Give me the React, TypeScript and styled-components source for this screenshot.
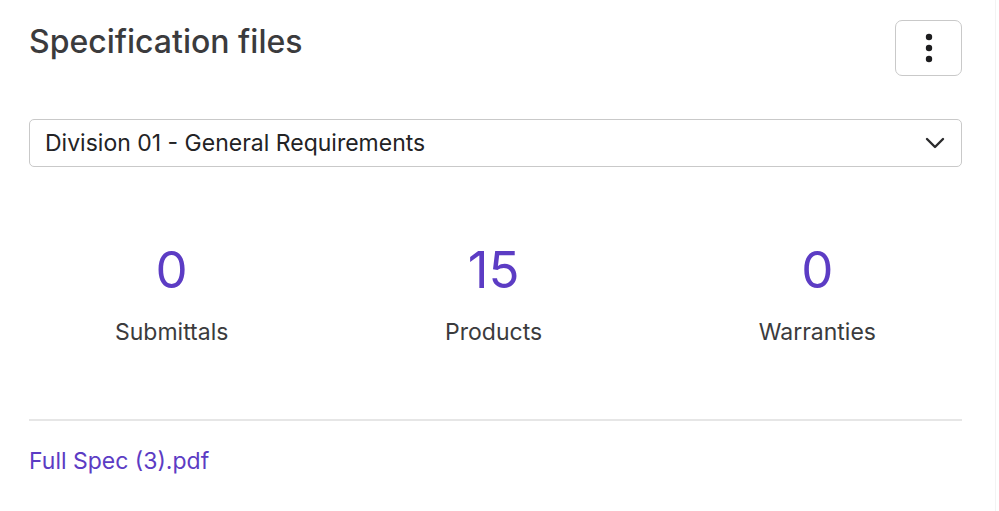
import styled, { createGlobalStyle } from 'styled-components';

const GlobalStyle = createGlobalStyle`
  html, body {
    margin: 0;
    padding: 0;
    background: #ffffff;
    font-family: Inter, "Noto Sans", sans-serif;
  }
`;

const Card = styled.section`
  box-sizing: border-box;
  width: 996px;
  height: 511px;
  padding: 20px 33px 0 29px;
  border-right: 1px solid #f3f3f3;
  background: #fff;
`;

const Header = styled.div`
  display: flex;
  align-items: flex-start;
  justify-content: space-between;
`;

const Title = styled.h2`
  margin: 2px 0 0;
  font-size: 32px;
  line-height: 40px;
  font-weight: 500;
  color: #3b3b3d;
`;

const MenuButton = styled.button`
  width: 67px;
  height: 56px;
  display: flex;
  align-items: center;
  justify-content: center;
  background: #fff;
  border: 1.5px solid #c9c9c9;
  border-radius: 7px;
  cursor: pointer;
  padding: 0;
`;

const SelectBox = styled.div`
  margin-top: 43px;
  height: 48px;
  box-sizing: border-box;
  display: flex;
  align-items: center;
  justify-content: space-between;
  padding: 0 16px 0 15px;
  border: 1.5px solid #c9c9c9;
  border-radius: 5px;
  font-size: 23px;
  color: #232325;
`;

const Stats = styled.div`
  display: flex;
  justify-content: space-between;
  padding: 0 86px;
  margin-top: 75px;
`;

const Stat = styled.div`
  display: flex;
  flex-direction: column;
  align-items: center;
`;

const StatValue = styled.div`
  font-size: 51px;
  line-height: 56px;
  color: #5c3cc4;
`;

const StatLabel = styled.div`
  margin-top: 20px;
  font-size: 23px;
  line-height: 28px;
  color: #3b3b3d;
`;

const Divider = styled.hr`
  margin: 73px 0 0;
  border: none;
  height: 2px;
  background: #e6e6e6;
`;

const FileLink = styled.a`
  display: inline-block;
  margin-top: 26px;
  font-size: 23px;
  line-height: 28px;
  color: #5c3cc4;
  text-decoration: none;
`;

const stats = [
  { value: 0, label: 'Submittals' },
  { value: 15, label: 'Products' },
  { value: 0, label: 'Warranties' },
];

export default function App() {
  return (
    <>
      <GlobalStyle />
      <Card>
        <Header>
          <Title>Specification files</Title>
          <MenuButton aria-label="More options">
            <svg width="8" height="30" viewBox="0 0 8 30">
              <circle cx="4" cy="4" r="3.2" fill="#1d1d1f" />
              <circle cx="4" cy="15" r="3.2" fill="#1d1d1f" />
              <circle cx="4" cy="26" r="3.2" fill="#1d1d1f" />
            </svg>
          </MenuButton>
        </Header>
        <SelectBox>
          <span>Division 01 - General Requirements</span>
          <svg width="20" height="12" viewBox="0 0 20 12" fill="none">
            <path d="M2 2l8 8 8-8" stroke="#2a2a2c" strokeWidth="2.4" strokeLinecap="round" strokeLinejoin="round" />
          </svg>
        </SelectBox>
        <Stats>
          {stats.map((s) => (
            <Stat key={s.label}>
              <StatValue>{s.value}</StatValue>
              <StatLabel>{s.label}</StatLabel>
            </Stat>
          ))}
        </Stats>
        <Divider />
        <FileLink href="#">Full Spec (3).pdf</FileLink>
      </Card>
    </>
  );
}
